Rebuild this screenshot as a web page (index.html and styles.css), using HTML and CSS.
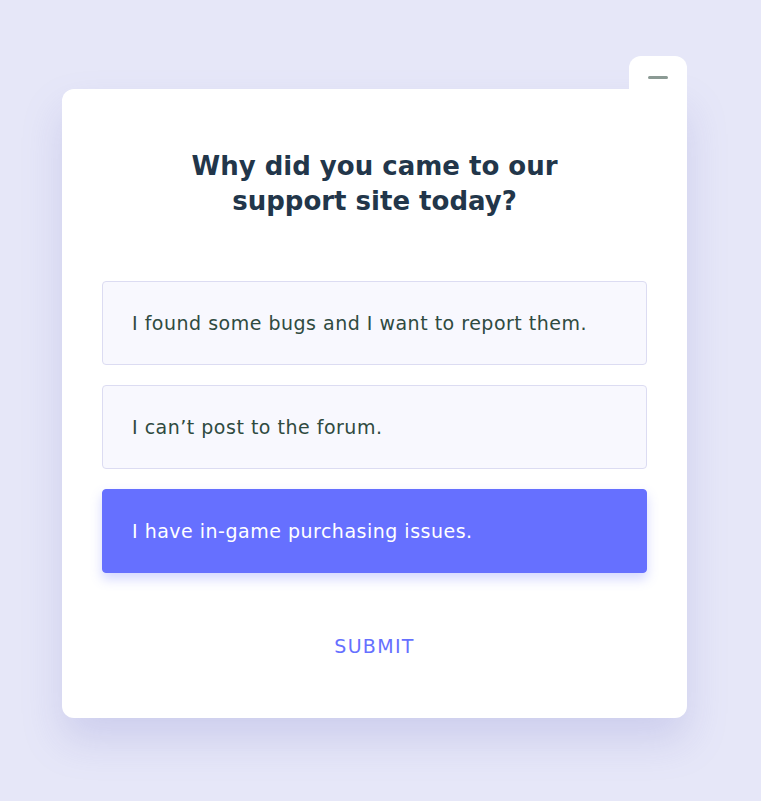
FILE: index.html
```html
<!DOCTYPE html>
<html lang="en">
<head>
<meta charset="utf-8">
<title>Support survey</title>
<link rel="stylesheet" href="styles.css">
</head>
<body>
<main class="stage">
  <section class="card">
    <button class="minimize" aria-label="Minimize"><span class="minimize-bar"></span></button>
    <h1 class="title">Why did you came to our<br>support site today?</h1>
    <ul class="options">
      <li class="option">I found some bugs and I want to report them.</li>
      <li class="option">I can’t post to the forum.</li>
      <li class="option option-selected">I have in-game purchasing issues.</li>
    </ul>
    <button class="submit">SUBMIT</button>
  </section>
</main>
</body>
</html>
```

FILE: styles.css
```css
html, body {
  margin: 0;
  padding: 0;
}
body {
  background: #e6e7f8;
  font-family: "DejaVu Sans", "Open Sans", sans-serif;
  width: 761px;
  height: 801px;
  overflow: hidden;
}
.stage {
  padding: 89px 0 0 62px;
}
.card {
  position: relative;
  width: 625px;
  height: 629px;
  box-sizing: border-box;
  background: #ffffff;
  border-radius: 12px 0 12px 12px;
  box-shadow: 0 22px 40px rgba(120, 120, 200, 0.22);
  padding: 60px 40px 0;
  display: flex;
  flex-direction: column;
  align-items: stretch;
}
.minimize {
  position: absolute;
  top: -33px;
  right: 0;
  width: 58px;
  height: 40px;
  border: 0;
  padding: 0;
  background: #ffffff;
  border-radius: 12px 12px 0 0;
  cursor: pointer;
}
.minimize-bar {
  position: absolute;
  left: 19px;
  top: 20px;
  width: 20px;
  height: 3px;
  border-radius: 2px;
  background: #8b9a94;
}
.title {
  margin: 0;
  text-align: center;
  font-size: 26px;
  line-height: 35px;
  font-weight: 700;
  color: #22364a;
}
.options {
  list-style: none;
  margin: 62px 0 0;
  padding: 0;
  display: flex;
  flex-direction: column;
  gap: 20px;
}
.option {
  height: 84px;
  box-sizing: border-box;
  display: flex;
  align-items: center;
  padding: 0 29px;
  background: #f8f8fe;
  border: 1px solid #dcdcf2;
  border-radius: 4px;
  font-size: 19px;
  letter-spacing: 0.5px;
  color: #2f4a40;
}
.option-selected {
  background: #6670ff;
  border-color: #6670ff;
  color: #ffffff;
  box-shadow: 0 6px 12px rgba(102, 112, 255, 0.28);
}
.submit {
  align-self: center;
  margin-top: 62px;
  border: 0;
  background: none;
  font-family: inherit;
  font-size: 19px;
  letter-spacing: 1.3px;
  color: #6670ff;
  cursor: pointer;
  padding: 0;
}
```
